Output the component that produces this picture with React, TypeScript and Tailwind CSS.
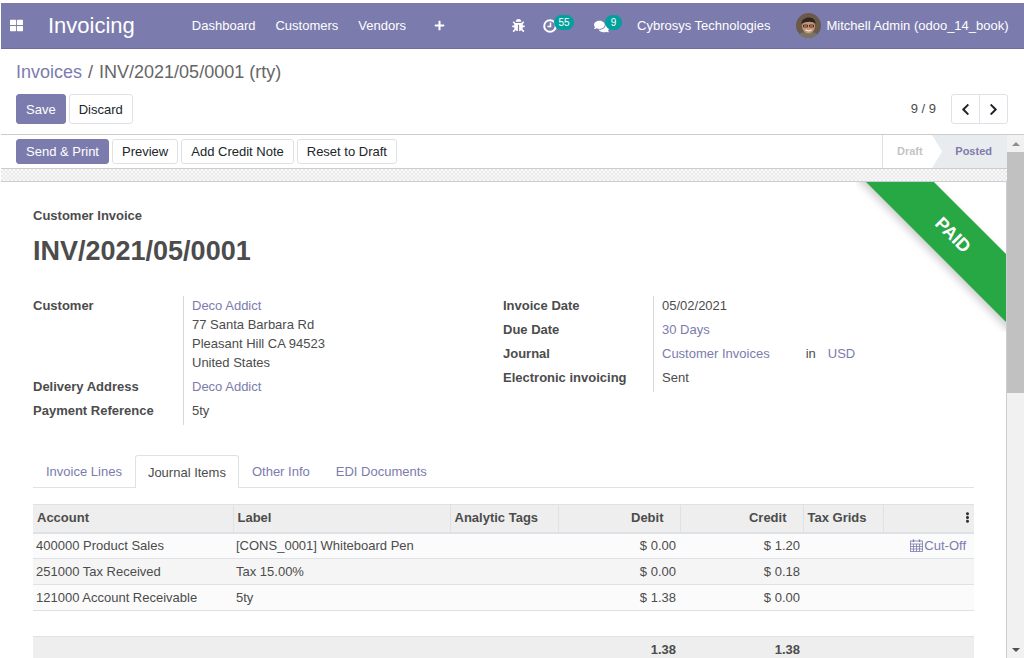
import React from 'react';
import { FaBug, FaChevronLeft, FaChevronRight, FaComments, FaEllipsisV, FaPlus, FaThLarge } from 'react-icons/fa';

const journalRows = [
  { account: '400000 Product Sales', label: '[CONS_0001] Whiteboard Pen', debit: '$ 0.00', credit: '$ 1.20', cutOff: true, odd: true },
  { account: '251000 Tax Received', label: 'Tax 15.00%', debit: '$ 0.00', credit: '$ 0.18', cutOff: false, odd: false },
  { account: '121000 Account Receivable', label: '5ty', debit: '$ 1.38', credit: '$ 0.00', cutOff: false, odd: true },
];

const Avatar = () => (
  <svg viewBox="0 0 25 25" className="h-[25px] w-[25px] shrink-0 rounded-full">
    <rect width="25" height="25" fill="#6b5a4c" />
    <path d="M0 25 C2 20 7 19 12 19 C18 19 23 20 25 25 Z" fill="#7a7466" />
    <ellipse cx="12.5" cy="13" rx="6.5" ry="7.5" fill="#c99474" />
    <path d="M5.5 11 C5 3 20 2 19.5 11 C17 8 10 8 5.5 11 Z" fill="#2e2420" />
    <path d="M7.5 12 h4 v2 h-4 z M13.5 12 h4 v2 h-4 z" fill="none" stroke="#2e2420" strokeWidth="0.8" />
    <path d="M9.5 17 q3 2 6 0" fill="none" stroke="#fff" strokeWidth="1" />
  </svg>
);

const ClockIcon = () => (
  <svg viewBox="0 0 14 14" className="h-[14px] w-[14px]" fill="none" stroke="currentColor">
    <circle cx="7" cy="7" r="5.8" strokeWidth="2" />
    <path d="M7.5 3.5 V7.5 H4.5" strokeWidth="1.5" />
  </svg>
);

const CalendarIcon = () => (
  <svg viewBox="0 0 13 13" className="h-[13px] w-[13px]" fill="none" stroke="currentColor" strokeWidth="0.8">
    <rect x="0.5" y="2" width="12" height="10.5" />
    <path d="M0.5 5 H12.5 M0.5 7.5 H12.5 M0.5 10 H12.5 M3.5 5 V12.5 M6.5 5 V12.5 M9.5 5 V12.5" />
    <path d="M3.5 0.5 V3 M9.5 0.5 V3" strokeWidth="1.4" />
  </svg>
);

const Navbar = () => (
  <header className="flex h-[46px] shrink-0 items-center whitespace-nowrap border-b border-[#6c6b9c] bg-[#7c7bad] text-[13px] text-white">
    <FaThLarge className="ml-[9px] h-[13px] w-[13px]" />
    <span className="ml-[25px] text-[22px]">Invoicing</span>
    <nav className="ml-[57px] flex items-center gap-[20px]">
      <span>Dashboard</span>
      <span>Customers</span>
      <span>Vendors</span>
    </nav>
    <FaPlus className="ml-[28px] h-[11px] w-[11px]" />
    <FaBug className="ml-[67px] h-[13px] w-[13px]" />
    <div className="relative ml-[18px] h-[14px] w-[14px]">
      <ClockIcon />
      <span className="absolute left-[11px] top-[-4px] flex h-[15px] w-[20px] items-center justify-center rounded-full bg-[#00a09d] text-[10px]">55</span>
    </div>
    <div className="relative ml-[37px] h-[14px] w-[16px]">
      <FaComments className="h-[15px] w-[15px]" />
      <span className="absolute left-[11px] top-[-4px] flex h-[15px] w-[17px] items-center justify-center rounded-full bg-[#00a09d] text-[10px]">9</span>
    </div>
    <span className="ml-[27px]">Cybrosys Technologies</span>
    <div className="ml-[26px]"><Avatar /></div>
    <span className="ml-[5px]">Mitchell Admin (odoo_14_book)</span>
  </header>
);

const Btn = ({ children, primary }: { children: React.ReactNode; primary?: boolean }) => (
  <button className={`rounded-[3px] border px-[9px] text-[13px] ${primary ? 'border-[#7c7bad] bg-[#7c7bad] text-white' : 'border-[#dee2e6] bg-white text-[#212529]'}`}>
    {children}
  </button>
);

const ControlPanel = () => (
  <div className="h-[86px] shrink-0 border-b border-[#ccc] bg-white pl-[15px] pr-[16px]">
    <div className="pt-[12px] text-[18px] leading-[22px] text-[#666]">
      <span className="text-[#7c7bad]">Invoices</span><span className="mx-[6px]">/</span>INV/2021/05/0001 (rty)
    </div>
    <div className="mt-[11px] flex h-[30px] items-stretch">
      <div className="flex gap-[3px] [&>button]:pt-[1px]">
        <Btn primary>Save</Btn>
        <Btn>Discard</Btn>
      </div>
      <div className="ml-auto flex items-center">
        <span className="mr-[15px] text-[13px] text-[#4c4c4c]">9 / 9</span>
        <div className="flex h-[30px] rounded-[3px] border border-[#dee2e6] text-[#212529]">
          <span className="flex w-[28px] items-center justify-center border-r border-[#dee2e6]"><FaChevronLeft className="h-[13px] w-[13px]" /></span>
          <span className="flex w-[27px] items-center justify-center"><FaChevronRight className="h-[13px] w-[13px]" /></span>
        </div>
      </div>
    </div>
  </div>
);

const StatusBar = () => (
  <div className="flex h-[34px] shrink-0 items-stretch justify-between border-b border-[#ccc] bg-white pl-[15px]">
    <div className="flex items-center gap-[3px] [&>button]:h-[25px]">
      <Btn primary>Send &amp; Print</Btn>
      <Btn>Preview</Btn>
      <Btn>Add Credit Note</Btn>
      <Btn>Reset to Draft</Btn>
    </div>
    <div className="relative flex border-l border-[#dee2e6] text-[11px] font-bold">
      <span className="flex w-[49px] items-center pl-[14px] text-[#c4c4c4]">Draft</span>
      <span className="flex w-[75px] items-center justify-end bg-[#e9ecef] pr-[15px] text-[#7c7bad] [clip-path:polygon(0_0,100%_0,100%_100%,0_100%,10px_50%)]">Posted</span>
    </div>
  </div>
);

const Field = ({ label, children, h = 'h-[24px]' }: { label: string; children: React.ReactNode; h?: string }) => (
  <div className={`flex ${h}`}>
    <div className="w-[150px] shrink-0 font-bold text-[#4c4c4c]">{label}</div>
    <div className="border-l border-[#d8d8d8] pl-[8px] leading-[19px]">{children}</div>
  </div>
);

const InvoiceForm = () => (
  <div className="flex text-[13px] leading-[19px] text-[#4c4c4c]">
    <div className="w-[470px] shrink-0">
      <Field label="Customer" h="h-[81px]">
        <div className="w-[200px]">
          <div className="text-[#7c7bad]">Deco Addict</div>
          <div>77 Santa Barbara Rd</div>
          <div>Pleasant Hill CA 94523</div>
          <div>United States</div>
        </div>
      </Field>
      <Field label="Delivery Address"><span className="text-[#7c7bad]">Deco Addict</span></Field>
      <Field label="Payment Reference"><span>5ty</span></Field>
    </div>
    <div className="flex-1">
      <Field label="Invoice Date">05/02/2021</Field>
      <Field label="Due Date"><span className="text-[#7c7bad]">30 Days</span></Field>
      <Field label="Journal">
        <span className="text-[#7c7bad]">Customer Invoices</span>
        <span className="ml-[36px]">in</span>
        <span className="ml-[12px] text-[#7c7bad]">USD</span>
      </Field>
      <Field label="Electronic invoicing">Sent</Field>
    </div>
  </div>
);

const Tabs = () => (
  <div className="flex h-[33px] border-b border-[#dee2e6] text-[13px] leading-[33px]">
    <span className="px-[13px] text-[#7c7bad]">Invoice Lines</span>
    <span className="-mb-px rounded-t-[3px] border border-b-0 border-[#dee2e6] bg-white px-[12px] text-[#4c4c4c]">Journal Items</span>
    <span className="px-[13px] text-[#7c7bad]">Other Info</span>
    <span className="px-[13px] text-[#7c7bad]">EDI Documents</span>
  </div>
);

const JournalTable = () => (
  <table className="mt-[16px] w-[941px] table-fixed border-collapse text-[13px] text-[#4c4c4c]">
    <colgroup>
      <col className="w-[200px]" />
      <col className="w-[217px]" />
      <col className="w-[108px]" />
      <col className="w-[122px]" />
      <col className="w-[123px]" />
      <col className="w-[80px]" />
      <col className="w-[91px]" />
    </colgroup>
    <thead>
      <tr className="h-[28px] border-y-2 border-t-[1px] border-[#dee2e6] bg-[#eeeeee] [&>th]:pb-[1px] [&>th]:font-bold">
        <th className="border-r border-[#dee2e6] pl-[4px] text-left">Account</th>
        <th className="border-r border-[#dee2e6] pl-[4px] text-left">Label</th>
        <th className="border-r border-[#dee2e6] pl-[4px] text-left">Analytic Tags</th>
        <th className="border-r border-[#dee2e6] pr-[16px] text-right">Debit</th>
        <th className="border-r border-[#dee2e6] pr-[16px] text-right">Credit</th>
        <th className="border-r border-[#dee2e6] pl-[4px] text-left">Tax Grids</th>
        <th className="pr-[2px]"><FaEllipsisV className="ml-auto h-[11px] w-[9px] text-[#333]" /></th>
      </tr>
    </thead>
    <tbody>
      {journalRows.map((row) => (
        <tr key={row.account} className={`h-[26px] border-b border-[#dee2e6] ${row.odd ? 'bg-[#fbfbfb]' : 'bg-[#f5f5f5]'}`}>
          <td className="pl-[3px]">{row.account}</td>
          <td className="pl-[3px]">{row.label}</td>
          <td />
          <td className="pr-[4px] text-right">{row.debit}</td>
          <td className="pr-[3px] text-right">{row.credit}</td>
          <td />
          <td className="pr-[8px] pt-[2px] text-right text-[#7c7bad]">
            {row.cutOff && (
              <span className="inline-flex items-center gap-[1px]"><CalendarIcon />Cut-Off</span>
            )}
          </td>
        </tr>
      ))}
      <tr className="h-[26px] border-b border-[#dee2e6]"><td colSpan={7} /></tr>
    </tbody>
    <tfoot>
      <tr className="h-[26px] bg-[#eeeeee] font-bold">
        <td colSpan={3} />
        <td className="pr-[4px] text-right">1.38</td>
        <td className="pr-[3px] text-right">1.38</td>
        <td colSpan={2} />
      </tr>
    </tfoot>
  </table>
);

const Scrollbar = () => (
  <div className="flex w-[17px] shrink-0 flex-col bg-[#f1f1f1]">
    <div className="flex h-[17px] items-center justify-center">
      <div className="h-0 w-0 border-x-[4px] border-b-[4px] border-x-transparent border-b-[#8f8f8f]" />
    </div>
    <div className="h-[241px] bg-[#c1c1c1]" />
    <div className="mt-auto flex h-[17px] items-center justify-center">
      <div className="h-0 w-0 border-x-[4px] border-t-[4px] border-x-transparent border-t-[#505050]" />
    </div>
  </div>
);

export default function App() {
  return (
    <div className="flex h-[658px] w-[1024px] flex-col overflow-hidden bg-white pl-[1px] pt-[3px] font-['Liberation_Sans',Arial,sans-serif]">
      <Navbar />
      <ControlPanel />
      <div className="flex min-h-0 flex-1">
        <div className="flex min-w-0 flex-1 flex-col">
          <StatusBar />
          <div className="min-h-0 flex-1 bg-[image:repeating-conic-gradient(#eaeaea_0_25%,#f8f8f8_0_50%)] bg-[length:4px_4px] pt-[12px]">
            <div className="relative h-full overflow-hidden border-r border-t border-[#ccccd4] bg-white pl-[32px] pr-[32px] pt-[25px]">
              <div className="absolute right-0 top-0 h-[150px] w-[150px] overflow-hidden">
                <div className="absolute left-[-13px] top-[29px] flex h-[48px] w-[220px] rotate-45 items-center justify-center bg-[#28a745] text-[18px] font-bold text-white shadow-[0_4px_8px_rgba(0,0,0,0.2)]">PAID</div>
              </div>
              <div className="text-[13px] font-bold leading-[17px] text-[#4c4c4c]">Customer Invoice</div>
              <h1 className="mt-[10px] text-[27px] font-bold leading-[34px] text-[#4c4c4c]">INV/2021/05/0001</h1>
              <div className="mt-[28px]"><InvoiceForm /></div>
              <div className="mt-[30px]"><Tabs /></div>
              <JournalTable />
            </div>
          </div>
        </div>
        <Scrollbar />
      </div>
    </div>
  );
}
